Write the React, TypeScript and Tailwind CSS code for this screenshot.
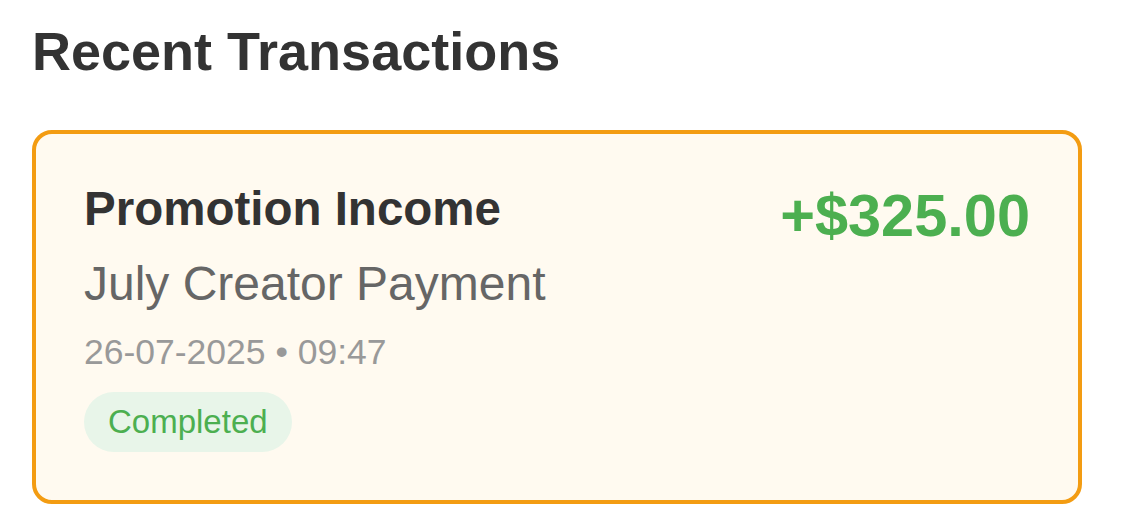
export default function App() {
  return (
    <div className="min-h-screen bg-white px-8 pt-[20px] font-['Liberation_Sans',Arial,sans-serif]">
      <h2 className="text-[54px] leading-[62px] font-bold text-[#333333]">Recent Transactions</h2>

      <div className="mt-[48px] w-[1050px] rounded-[20px] border-4 border-[#f39c12] bg-[#fffaf0] p-12">
        <div className="flex items-start justify-between">
          <div className="flex flex-col">
            <div className="text-[47.5px] leading-[54px] font-bold text-[#333333]">Promotion Income</div>
            <div className="mt-[20px] text-[48px] leading-[56px] text-[#666666]">July Creator Payment</div>
            <div className="mt-[20px] text-[35.5px] leading-[40px] text-[#999999]">26-07-2025 • 09:47</div>
            <div className="mt-[20px]">
              <span className="inline-block rounded-full bg-[#e8f5e9] px-6 py-[11px] text-[33px] leading-[38px] text-[#4caf50]">
                Completed
              </span>
            </div>
          </div>
          <div className="mt-[1px] text-[59.5px] leading-[66px] font-bold text-[#4caf50]">+$325.00</div>
        </div>
      </div>
    </div>
  );
}
